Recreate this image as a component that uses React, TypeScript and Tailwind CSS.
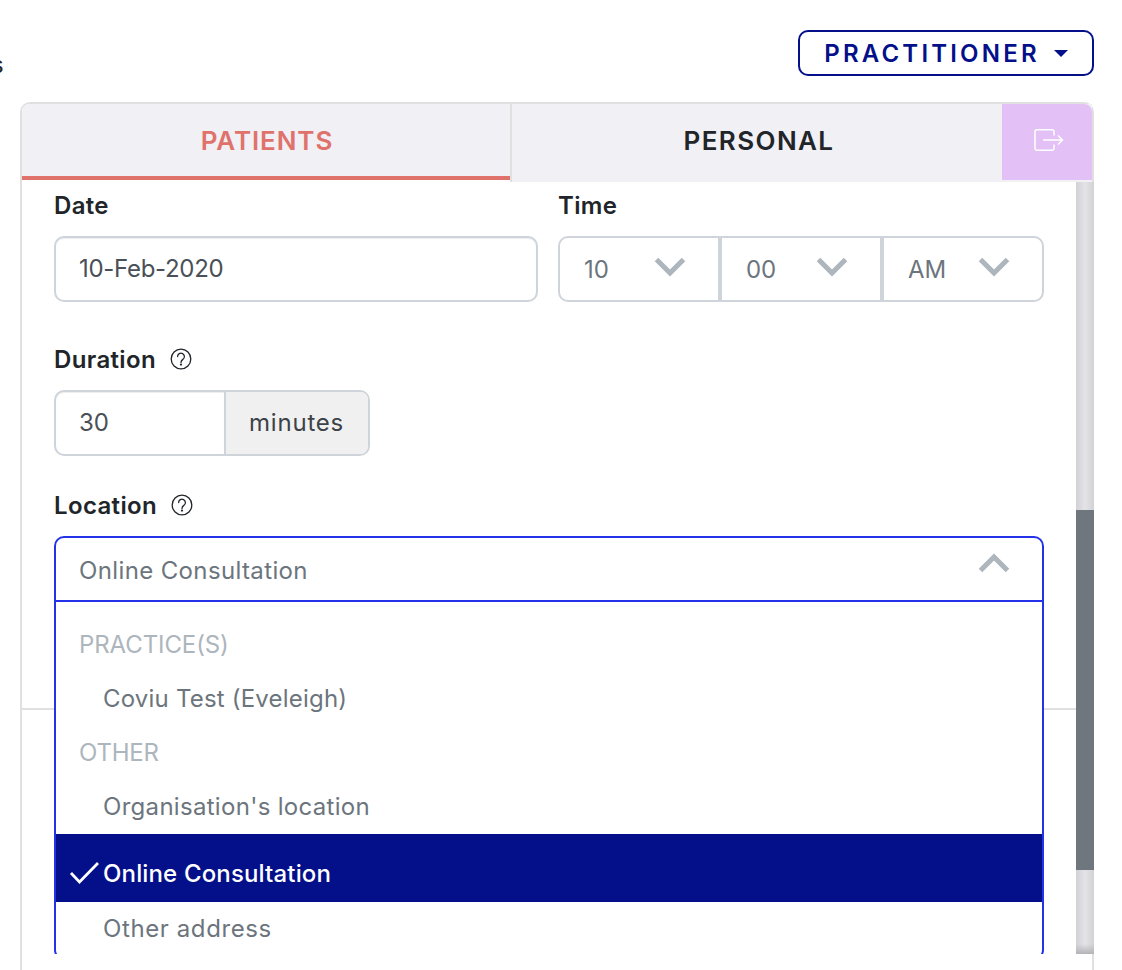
import React from "react";

const font = { fontFamily: '"Inter", "Liberation Sans", sans-serif' };

function Chevron({ up = false }: { up?: boolean }) {
  return (
    <svg width="32" height="20" viewBox="0 0 32 20" className="shrink-0">
      <path d={up ? "M2.5 17.5 L16 4 L29.5 17.5" : "M2.5 2.5 L16 16 L29.5 2.5"} fill="none" stroke="#adb5bd" strokeWidth="5" />
    </svg>
  );
}

function Help() {
  return (
    <svg width="22" height="22" viewBox="0 0 22 22" fill="none" stroke="#212529" strokeWidth="1.3" className="shrink-0">
      <circle cx="11" cy="11" r="9.8" />
      <path d="M7.6 8.6a3.4 3.4 0 1 1 5.3 2.8c-1.2.8-1.9 1.5-1.9 3" strokeLinecap="round" />
      <circle cx="11" cy="16.6" r="0.5" fill="#212529" />
    </svg>
  );
}

function TimeSelect({ value, last }: { value: string; last?: boolean }) {
  return (
    <div className={`flex-1 h-full flex justify-between pl-[24px] pr-[32px] ${last ? "" : "border-r-[4px] border-[#ced4da]"}`}>
      <span className="text-[#6c757d] text-[24px] leading-none pt-[20px] tracking-[-0.1px]">{value}</span>
      <span className="pt-[19px]"><Chevron /></span>
    </div>
  );
}

function Option({ children, track = "" }: { children: React.ReactNode; track?: string }) {
  return <div className={`h-[54px] flex items-center pl-[47px] text-[#6c757d] text-[24px] font-normal ${track}`}>{children}</div>;
}

function Group({ children, track }: { children: React.ReactNode; track: string }) {
  return <div className={`h-[54px] flex items-center pl-[23px] text-[#adb5bd] text-[24px] font-normal ${track}`}>{children}</div>;
}

export default function App() {
  return (
    <div style={font} className="h-[970px] w-[1122px] overflow-hidden bg-white flex flex-col">
      <header className="h-[102px] flex justify-between shrink-0 pt-[30px] pr-[28px]">
        <span className="-ml-[9px] mt-[23px] text-[24px] leading-none text-[#212529]">s</span>
        <button className="w-[296px] h-[46px] border-2 border-[#03108a] rounded-[10px] flex items-center justify-center gap-[14px] text-[#03108a] text-[24px] font-semibold tracking-[3.2px] pt-[2px]">
          PRACTITIONER
          <span className="w-0 h-0 border-x-[7px] border-x-transparent border-t-[7px] border-t-[#03108a] -mt-[2px]" />
        </button>
      </header>

      <main className="w-[1074px] ml-[20px] flex-1 border-2 border-b-0 border-[#e0e0e0] rounded-t-[10px] flex flex-col min-h-0">
        <nav className="h-[78px] shrink-0 flex items-start bg-white rounded-t-[8px]">
          <div className="w-[488px] h-[76px] bg-[#f0f0f5] rounded-tl-[8px] border-b-[4px] border-[#e0726c] flex items-center justify-center text-[#e0726c] text-[26px] font-semibold tracking-[0.9px] pl-[2px]">
            PATIENTS
          </div>
          <div className="w-[492px] h-[78px] bg-[#f0f0f5] border-l-2 border-[#e0e0e0] flex items-center justify-center text-[#212529] text-[26px] font-semibold tracking-[1.4px] pb-[6px] pl-[4px]">
            PERSONAL
          </div>
          <div className="w-[90px] h-[78px] bg-[#f0f0f5]">
            <div className="h-[76px] bg-[#e3c0f5] rounded-tr-[8px] flex items-center justify-center pb-[5px] pl-[4px]">
              <svg width="30" height="22" viewBox="0 0 30 22" fill="none" stroke="white" strokeWidth="1.5">
                <path d="M20 6.5V2.5a1.7 1.7 0 0 0-1.7-1.7H2.7A1.7 1.7 0 0 0 1 2.5v17a1.7 1.7 0 0 0 1.7 1.7h15.6a1.7 1.7 0 0 0 1.7-1.7v-4" />
                <path d="M9 11h19.5M24 6.5l4.5 4.5-4.5 4.5" />
              </svg>
            </div>
          </div>
        </nav>

        <div className="h-[772px] shrink-0 flex -mr-[2px] overflow-hidden">
          <div className="flex-1 min-w-0 bg-white">
            <div className="flex gap-[20px] pl-[32px] pr-[32px]">
              <div className="w-[484px]">
                <div className="h-[54px] pt-[10px] text-[24px] leading-[28px] font-semibold text-[#212529] tracking-[0.3px]">Date</div>
                <div className="h-[66px] border-2 border-[#ced4da] rounded-[10px] shadow-[inset_0_1px_1px_rgba(0,0,0,0.075)] pl-[23px] flex items-center text-[24px] text-[#495057] tracking-[-0.3px]">10-Feb-2020</div>
              </div>
              <div className="w-[486px]">
                <div className="h-[54px] pt-[10px] text-[24px] leading-[28px] font-semibold text-[#212529] tracking-[0.3px]">Time</div>
                <div className="h-[66px] border-2 border-[#ced4da] rounded-[10px] flex">
                  <TimeSelect value="10" />
                  <TimeSelect value="00" />
                  <TimeSelect value="AM" last />
                </div>
              </div>
            </div>

            <div className="pl-[32px] mt-[42px]">
              <div className="h-[46px] flex items-start gap-[14px] text-[24px] leading-[32px] font-semibold text-[#212529] tracking-[0.35px]">
                Duration <span className="pt-[4px]"><Help /></span>
              </div>
              <div className="w-[316px] h-[66px] border-2 border-[#ced4da] rounded-[10px] flex text-[24px]">
                <div className="w-[168px] pl-[23px] flex items-center text-[#495057] rounded-l-[8px] shadow-[inset_0_1px_1px_rgba(0,0,0,0.075)]">30</div>
                <div className="flex-1 border-l-2 border-[#ced4da] bg-[#f0f0f0] rounded-r-[8px] flex items-center pl-[23px] text-[#3c4248] tracking-[0.8px]">minutes</div>
              </div>
            </div>

            <div className="pl-[32px] pr-[32px] mt-[34px]">
              <div className="h-[46px] flex items-start gap-[14px] text-[24px] leading-[32px] font-semibold text-[#212529] tracking-[0.35px]">
                Location <span className="pt-[4px]"><Help /></span>
              </div>
              <div className="relative">
                <div className="h-[66px] border-2 border-[#2433e8] rounded-t-[10px] pl-[23px] pr-[32px] flex items-center justify-between text-[24px] text-[#6c757d]">
                  <span className="tracking-[0.37px] pt-[3px]">Online Consultation</span>
                  <span className="-mt-[12px]"><Chevron up /></span>
                </div>
                <div className="absolute top-[64px] left-0 right-0 h-[360px] bg-white border-2 border-[#2433e8] rounded-b-[10px] pt-[16px]">
                  <Group track="tracking-[-0.1px]">PRACTICE(S)</Group>
                  <Option track="tracking-[0.2px]">Coviu Test (Eveleigh)</Option>
                  <Group track="tracking-[-0.2px]">OTHER</Group>
                  <Option track="tracking-[0.3px]">Organisation's location</Option>
                  <div className="h-[68px] bg-[#03108a] text-white flex items-end pb-[16px] pl-[13px] text-[24px] leading-none font-medium">
                    <svg width="30" height="24" viewBox="0 0 30 24" fill="none" stroke="white" strokeWidth="2.8" className="shrink-0 mr-[4px]">
                      <path d="M2 11 L10.5 20 L29 1" />
                    </svg>
                    <span className="tracking-[0.15px]">Online Consultation</span>
                  </div>
                  <Option track="tracking-[0.6px]">Other address</Option>
                </div>
              </div>
            </div>

            <div className="mt-[106px] border-t-2 border-[#e0e0e0]" />
          </div>

          <div className="w-[18px] shrink-0 flex flex-col">
            <div className="h-[328px] bg-gradient-to-r from-[#d2d2d6] via-[#e4e4e8] to-[#d2d2d6]" />
            <div className="h-[360px] bg-[#6f767e]" />
            <div className="h-[84px] flex flex-col justify-end bg-gradient-to-r from-[#d2d2d6] via-[#e4e4e8] to-[#d2d2d6]">
              <div className="h-[10px] bg-gradient-to-b from-transparent to-[#b4b4b8]" />
            </div>
          </div>
        </div>
      </main>
    </div>
  );
}
